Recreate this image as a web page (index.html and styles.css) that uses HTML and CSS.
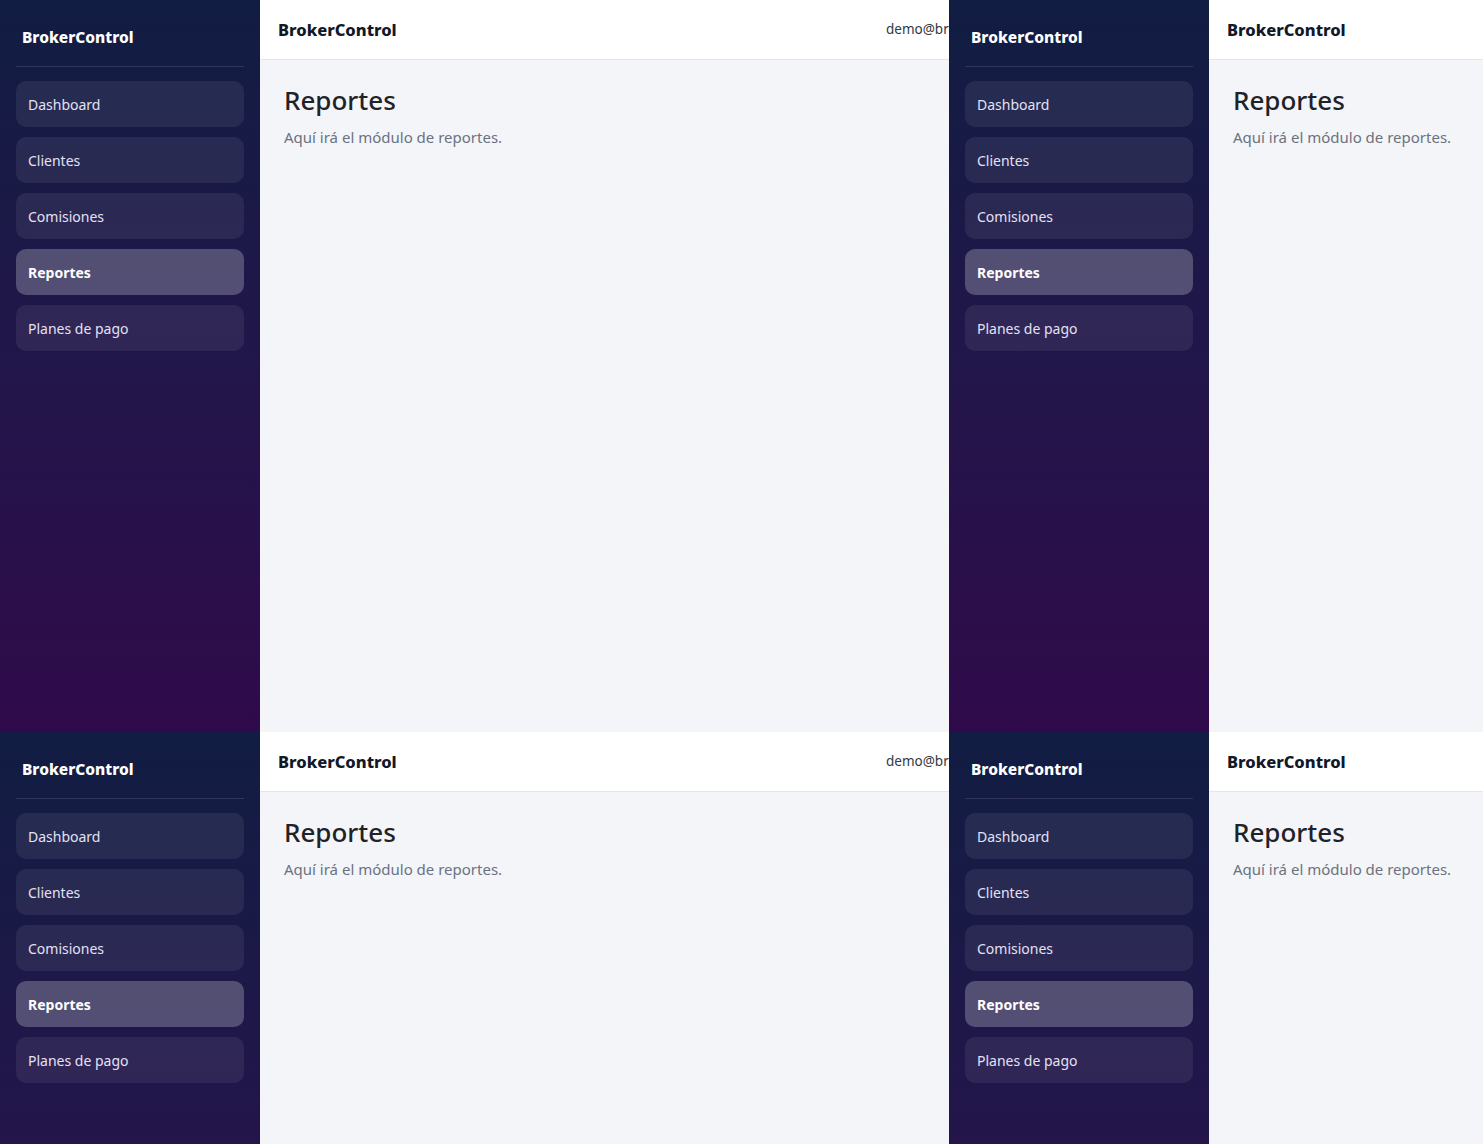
FILE: index.html
```html
<!DOCTYPE html>
<html lang="es">
<head>
<meta charset="utf-8">
<title>BrokerControl - Reportes</title>
<link rel="stylesheet" href="styles.css">
</head>
<body>
<div class="tiles">
  <div class="tile">
    <div class="app">
      <aside class="sidebar">
        <div class="side-brand">BrokerControl</div>
        <nav class="nav">
          <a class="nav-item">Dashboard</a>
          <a class="nav-item">Clientes</a>
          <a class="nav-item">Comisiones</a>
          <a class="nav-item active">Reportes</a>
          <a class="nav-item">Planes de pago</a>
        </nav>
      </aside>
      <div class="main">
        <header class="topbar">
          <span class="top-brand">BrokerControl</span>
          <span class="user">demo@brokercontrol.com</span>
        </header>
        <section class="content">
          <h1 class="title">Reportes</h1>
          <p class="subtitle">Aquí irá el módulo de reportes.</p>
        </section>
      </div>
    </div>
  </div>
  <div class="tile">
    <div class="app">
      <aside class="sidebar">
        <div class="side-brand">BrokerControl</div>
        <nav class="nav">
          <a class="nav-item">Dashboard</a>
          <a class="nav-item">Clientes</a>
          <a class="nav-item">Comisiones</a>
          <a class="nav-item active">Reportes</a>
          <a class="nav-item">Planes de pago</a>
        </nav>
      </aside>
      <div class="main">
        <header class="topbar">
          <span class="top-brand">BrokerControl</span>
          <span class="user">demo@brokercontrol.com</span>
        </header>
        <section class="content">
          <h1 class="title">Reportes</h1>
          <p class="subtitle">Aquí irá el módulo de reportes.</p>
        </section>
      </div>
    </div>
  </div>
  <div class="tile">
    <div class="app">
      <aside class="sidebar">
        <div class="side-brand">BrokerControl</div>
        <nav class="nav">
          <a class="nav-item">Dashboard</a>
          <a class="nav-item">Clientes</a>
          <a class="nav-item">Comisiones</a>
          <a class="nav-item active">Reportes</a>
          <a class="nav-item">Planes de pago</a>
        </nav>
      </aside>
      <div class="main">
        <header class="topbar">
          <span class="top-brand">BrokerControl</span>
          <span class="user">demo@brokercontrol.com</span>
        </header>
        <section class="content">
          <h1 class="title">Reportes</h1>
          <p class="subtitle">Aquí irá el módulo de reportes.</p>
        </section>
      </div>
    </div>
  </div>
  <div class="tile">
    <div class="app">
      <aside class="sidebar">
        <div class="side-brand">BrokerControl</div>
        <nav class="nav">
          <a class="nav-item">Dashboard</a>
          <a class="nav-item">Clientes</a>
          <a class="nav-item">Comisiones</a>
          <a class="nav-item active">Reportes</a>
          <a class="nav-item">Planes de pago</a>
        </nav>
      </aside>
      <div class="main">
        <header class="topbar">
          <span class="top-brand">BrokerControl</span>
          <span class="user">demo@brokercontrol.com</span>
        </header>
        <section class="content">
          <h1 class="title">Reportes</h1>
          <p class="subtitle">Aquí irá el módulo de reportes.</p>
        </section>
      </div>
    </div>
  </div>
</div>
</body>
</html>
```
FILE: styles.css
```css
* { box-sizing: border-box; }
html, body {
  margin: 0;
  padding: 0;
  width: 1483px;
  height: 1144px;
  overflow: hidden;
  background: #f4f5f9;
  font-family: "Noto Sans", "Open Sans", sans-serif;
}
.tiles {
  display: grid;
  grid-template-columns: 949px 534px;
  grid-template-rows: 732px 412px;
}
.tile {
  overflow: hidden;
  background: #f4f5f9;
}
.app {
  width: 1100px;
  height: 732px;
  display: flex;
}
.sidebar {
  width: 260px;
  flex: none;
  height: 732px;
  padding: 0 16px;
  background: linear-gradient(180deg, #111d42 0%, #22164a 50%, #300a4a 100%);
}
.side-brand {
  height: 67px;
  padding: 27px 0 0 6px;
  color: #ffffff;
  font-weight: 800;
  font-size: 15.5px;
  line-height: 20px;
  border-bottom: 1px solid rgba(255,255,255,0.12);
}
.nav {
  display: flex;
  flex-direction: column;
  gap: 10px;
  padding-top: 14px;
}
.nav-item {
  display: block;
  height: 46px;
  padding: 0 12px;
  line-height: 48px;
  border-radius: 10px;
  background: rgba(255,255,255,0.07);
  color: #e4e1f4;
  font-size: 14px;
}
.nav-item.active {
  background: rgba(255,255,255,0.24);
  color: #ffffff;
  font-weight: 700;
}
.main {
  flex: 1;
  display: flex;
  flex-direction: column;
  background: #f4f5f9;
}
.topbar {
  height: 60px;
  flex: none;
  display: grid;
  grid-template-columns: 608px auto;
  align-items: center;
  padding: 0 18px;
  background: #ffffff;
  border-bottom: 1px solid #e4e6ec;
}
.top-brand {
  font-weight: 800;
  font-size: 16.5px;
  color: #111827;
  margin-top: -1px;
}
.user {
  font-size: 13.5px;
  color: #333745;
  margin-top: -2px;
  white-space: nowrap;
}
.content {
  padding: 23px 24px;
}
.title {
  margin: 0;
  font-size: 26px;
  line-height: 34px;
  font-weight: 500;
  color: #1f2328;
}
.subtitle {
  margin: 9px 0 0;
  font-size: 15px;
  line-height: 22px;
  color: #6b7280;
}
```
